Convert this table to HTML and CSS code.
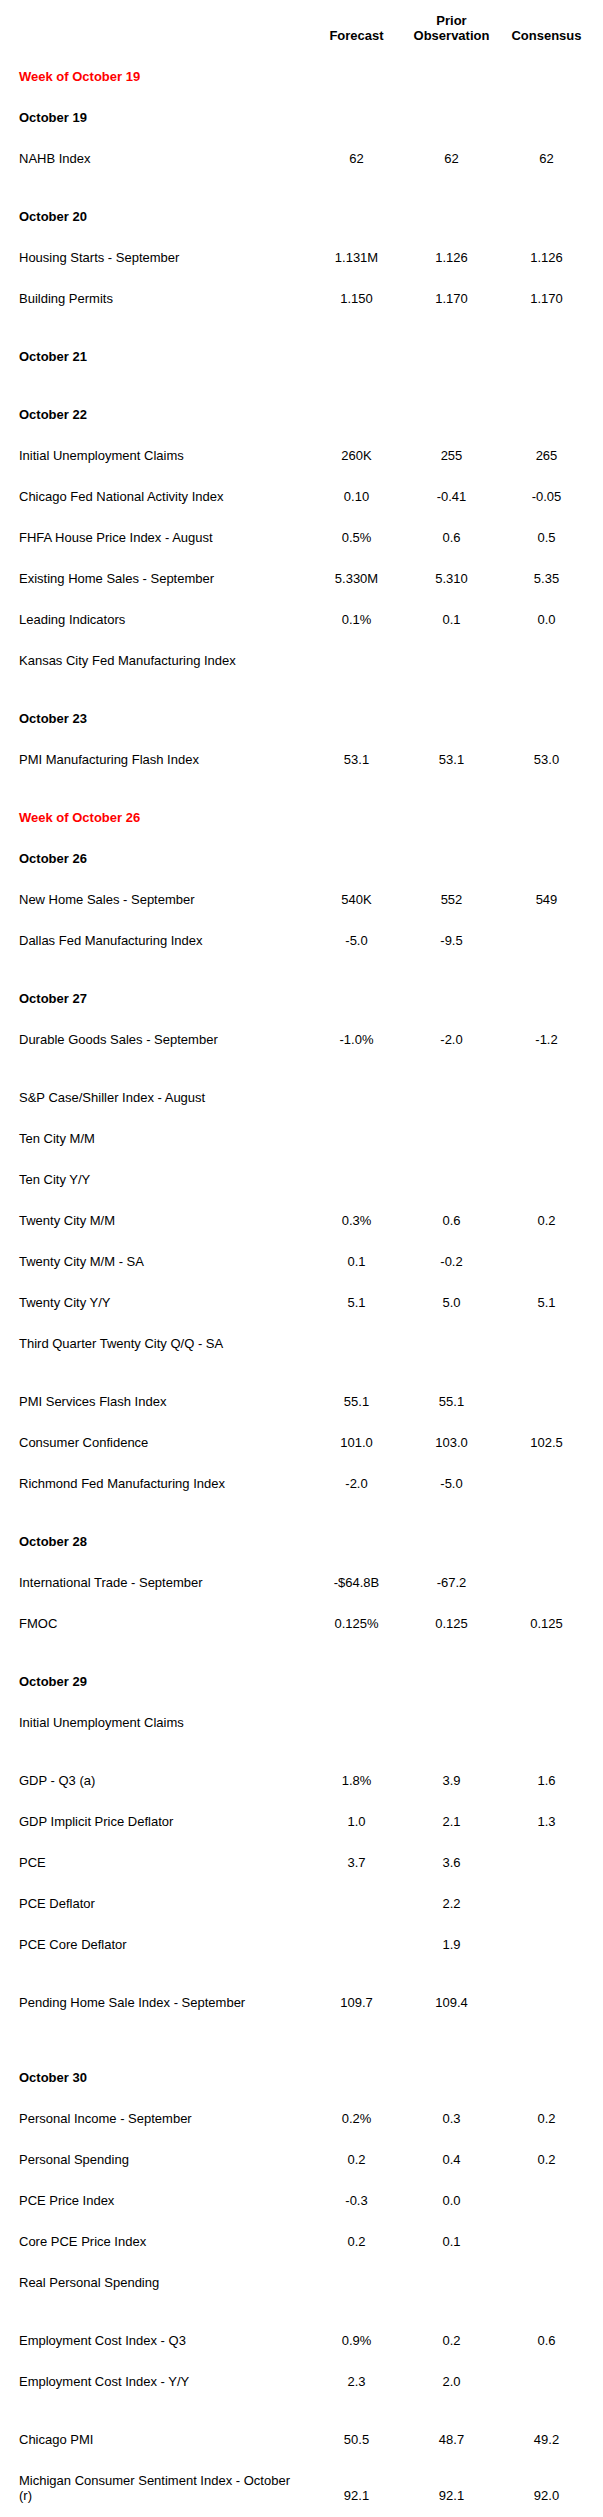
FILE: index.html
```html
<!DOCTYPE html>
<html lang="en">
<head>
<meta charset="utf-8">
<title>Economic Calendar</title>
<link rel="stylesheet" href="styles.css">
</head>
<body>
<table class="cal">
  <colgroup>
    <col class="c-label">
    <col class="c-val">
    <col class="c-val">
    <col class="c-val">
  </colgroup>
  <thead>
    <tr class="head">
      <th class="lbl"></th>
      <th class="v">Forecast</th>
      <th class="v">Prior<br>Observation</th>
      <th class="v">Consensus</th>
    </tr>
  </thead>
  <tbody>
    <tr><td class="lbl week" colspan="4">Week of October 19</td></tr>
    <tr><td class="lbl date" colspan="4">October 19</td></tr>
    <tr><td class="lbl">NAHB Index</td><td class="v">62</td><td class="v">62</td><td class="v">62</td></tr>
    <tr class="sp"><td colspan="4"></td></tr>
    <tr><td class="lbl date" colspan="4">October 20</td></tr>
    <tr><td class="lbl">Housing Starts - September</td><td class="v">1.131M</td><td class="v">1.126</td><td class="v">1.126</td></tr>
    <tr><td class="lbl">Building Permits</td><td class="v">1.150</td><td class="v">1.170</td><td class="v">1.170</td></tr>
    <tr class="sp"><td colspan="4"></td></tr>
    <tr><td class="lbl date" colspan="4">October 21</td></tr>
    <tr class="sp"><td colspan="4"></td></tr>
    <tr><td class="lbl date" colspan="4">October 22</td></tr>
    <tr><td class="lbl">Initial Unemployment Claims</td><td class="v">260K</td><td class="v">255</td><td class="v">265</td></tr>
    <tr><td class="lbl">Chicago Fed National Activity Index</td><td class="v">0.10</td><td class="v">-0.41</td><td class="v">-0.05</td></tr>
    <tr><td class="lbl">FHFA House Price Index - August</td><td class="v">0.5%</td><td class="v">0.6</td><td class="v">0.5</td></tr>
    <tr><td class="lbl">Existing Home Sales - September</td><td class="v">5.330M</td><td class="v">5.310</td><td class="v">5.35</td></tr>
    <tr><td class="lbl">Leading Indicators</td><td class="v">0.1%</td><td class="v">0.1</td><td class="v">0.0</td></tr>
    <tr><td class="lbl">Kansas City Fed Manufacturing Index</td><td class="v"></td><td class="v"></td><td class="v"></td></tr>
    <tr class="sp"><td colspan="4"></td></tr>
    <tr><td class="lbl date" colspan="4">October 23</td></tr>
    <tr><td class="lbl">PMI Manufacturing Flash Index</td><td class="v">53.1</td><td class="v">53.1</td><td class="v">53.0</td></tr>
    <tr class="sp"><td colspan="4"></td></tr>
    <tr><td class="lbl week" colspan="4">Week of October 26</td></tr>
    <tr><td class="lbl date" colspan="4">October 26</td></tr>
    <tr><td class="lbl">New Home Sales - September</td><td class="v">540K</td><td class="v">552</td><td class="v">549</td></tr>
    <tr><td class="lbl">Dallas Fed Manufacturing Index</td><td class="v">-5.0</td><td class="v">-9.5</td><td class="v"></td></tr>
    <tr class="sp"><td colspan="4"></td></tr>
    <tr><td class="lbl date" colspan="4">October 27</td></tr>
    <tr><td class="lbl">Durable Goods Sales - September</td><td class="v">-1.0%</td><td class="v">-2.0</td><td class="v">-1.2</td></tr>
    <tr class="sp"><td colspan="4"></td></tr>
    <tr><td class="lbl">S&amp;P Case/Shiller Index - August</td><td class="v"></td><td class="v"></td><td class="v"></td></tr>
    <tr><td class="lbl">Ten City M/M</td><td class="v"></td><td class="v"></td><td class="v"></td></tr>
    <tr><td class="lbl">Ten City Y/Y</td><td class="v"></td><td class="v"></td><td class="v"></td></tr>
    <tr><td class="lbl">Twenty City M/M</td><td class="v">0.3%</td><td class="v">0.6</td><td class="v">0.2</td></tr>
    <tr><td class="lbl">Twenty City M/M - SA</td><td class="v">0.1</td><td class="v">-0.2</td><td class="v"></td></tr>
    <tr><td class="lbl">Twenty City Y/Y</td><td class="v">5.1</td><td class="v">5.0</td><td class="v">5.1</td></tr>
    <tr><td class="lbl">Third Quarter Twenty City Q/Q - SA</td><td class="v"></td><td class="v"></td><td class="v"></td></tr>
    <tr class="sp"><td colspan="4"></td></tr>
    <tr><td class="lbl">PMI Services Flash Index</td><td class="v">55.1</td><td class="v">55.1</td><td class="v"></td></tr>
    <tr><td class="lbl">Consumer Confidence</td><td class="v">101.0</td><td class="v">103.0</td><td class="v">102.5</td></tr>
    <tr><td class="lbl">Richmond Fed Manufacturing Index</td><td class="v">-2.0</td><td class="v">-5.0</td><td class="v"></td></tr>
    <tr class="sp"><td colspan="4"></td></tr>
    <tr><td class="lbl date" colspan="4">October 28</td></tr>
    <tr><td class="lbl">International Trade - September</td><td class="v">-$64.8B</td><td class="v">-67.2</td><td class="v"></td></tr>
    <tr><td class="lbl">FMOC</td><td class="v">0.125%</td><td class="v">0.125</td><td class="v">0.125</td></tr>
    <tr class="sp"><td colspan="4"></td></tr>
    <tr><td class="lbl date" colspan="4">October 29</td></tr>
    <tr><td class="lbl">Initial Unemployment Claims</td><td class="v"></td><td class="v"></td><td class="v"></td></tr>
    <tr class="sp"><td colspan="4"></td></tr>
    <tr><td class="lbl">GDP - Q3 (a)</td><td class="v">1.8%</td><td class="v">3.9</td><td class="v">1.6</td></tr>
    <tr><td class="lbl">GDP Implicit Price Deflator</td><td class="v">1.0</td><td class="v">2.1</td><td class="v">1.3</td></tr>
    <tr><td class="lbl">PCE</td><td class="v">3.7</td><td class="v">3.6</td><td class="v"></td></tr>
    <tr><td class="lbl">PCE Deflator</td><td class="v"></td><td class="v">2.2</td><td class="v"></td></tr>
    <tr><td class="lbl">PCE Core Deflator</td><td class="v"></td><td class="v">1.9</td><td class="v"></td></tr>
    <tr class="sp"><td colspan="4"></td></tr>
    <tr><td class="lbl">Pending Home Sale Index - September</td><td class="v">109.7</td><td class="v">109.4</td><td class="v"></td></tr>
    <tr class="sp"><td colspan="4"></td></tr>
    <tr class="sp"><td colspan="4"></td></tr>
    <tr><td class="lbl date" colspan="4">October 30</td></tr>
    <tr><td class="lbl">Personal Income - September</td><td class="v">0.2%</td><td class="v">0.3</td><td class="v">0.2</td></tr>
    <tr><td class="lbl">Personal Spending</td><td class="v">0.2</td><td class="v">0.4</td><td class="v">0.2</td></tr>
    <tr><td class="lbl">PCE Price Index</td><td class="v">-0.3</td><td class="v">0.0</td><td class="v"></td></tr>
    <tr><td class="lbl">Core PCE Price Index</td><td class="v">0.2</td><td class="v">0.1</td><td class="v"></td></tr>
    <tr><td class="lbl">Real Personal Spending</td><td class="v"></td><td class="v"></td><td class="v"></td></tr>
    <tr class="sp"><td colspan="4"></td></tr>
    <tr><td class="lbl">Employment Cost Index - Q3</td><td class="v">0.9%</td><td class="v">0.2</td><td class="v">0.6</td></tr>
    <tr><td class="lbl">Employment Cost Index - Y/Y</td><td class="v">2.3</td><td class="v">2.0</td><td class="v"></td></tr>
    <tr class="sp"><td colspan="4"></td></tr>
    <tr><td class="lbl">Chicago PMI</td><td class="v">50.5</td><td class="v">48.7</td><td class="v">49.2</td></tr>
    <tr><td class="lbl">Michigan Consumer Sentiment Index - October (r)</td><td class="v">92.1</td><td class="v">92.1</td><td class="v">92.0</td></tr>
  </tbody>
</table>
</body>
</html>
```
FILE: styles.css
```css
html, body {
  margin: 0;
  padding: 0;
  background: #ffffff;
}

body {
  font-family: "Liberation Sans", Arial, sans-serif;
  font-size: 13px;
  line-height: 15px;
  color: #000000;
}

.cal {
  margin-left: 8px;
  width: 586px;
  table-layout: fixed;
  border-collapse: collapse;
  border-spacing: 0;
}

.c-label {
  width: 301px;
}

.c-val {
  width: 95px;
}

.cal th,
.cal td {
  padding: 13px 0;
  vertical-align: bottom;
}

.cal th {
  font-weight: bold;
}

.cal .lbl {
  text-align: left;
  padding-left: 11px;
  padding-right: 9px;
}

.cal .v {
  text-align: center;
}

.cal .date {
  font-weight: bold;
}

.cal .week {
  font-weight: bold;
  color: #ff0000;
}

.cal .sp td {
  padding: 0;
  height: 17px;
}
```
